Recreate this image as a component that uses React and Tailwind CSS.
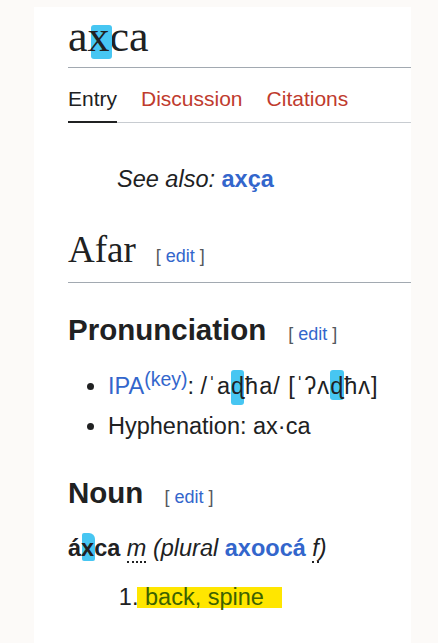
const Edit = () => (
  <span className="text-[18px] leading-[24px] text-[#54595d]">
    [ <span className="text-[#3366cc]">edit</span> ]
  </span>
);

// cyan marker box behind one glyph
const Mark = ({ children, box }) => (
  <span className="relative">
    <span className={box}></span>
    <span className="relative">{children}</span>
  </span>
);

export default function App() {
  return (
    <div className="min-h-screen bg-[#fcfaf8] pt-[7px] pl-[34px] pr-[27px]">
      <div className="min-h-[636px] bg-white pl-[34px] pt-[4px] text-[#202122] font-['Liberation_Sans',Arial,sans-serif]">
        <h1 className="border-b border-[#a2a9b1] pb-[4px] text-[44px] leading-[52px] font-normal font-['Liberation_Serif','Times_New_Roman',serif]">
          a
          <Mark box="absolute left-[3px] top-[13px] h-[34px] w-[21px] rounded-[3px] bg-[#47c6f2]">x</Mark>
          ca
        </h1>

        <nav className="mt-[16px] flex gap-[24px] border-b border-[#c8ccd1] text-[21px] leading-[30px]">
          <span className="-mb-px border-b-2 border-[#202122] pb-[7px]">Entry</span>
          <span className="-mb-px border-b-2 border-transparent pb-[7px] text-[#bf3b2e]">Discussion</span>
          <span className="-mb-px border-b-2 border-transparent pb-[7px] text-[#bf3b2e]">Citations</span>
        </nav>

        <div className="mt-[40px] pl-[49px] text-[23.5px] leading-[32px] italic">
          See also: <b className="not-italic text-[#3366cc]">axça</b>
        </div>

        <div className="mt-[33px] flex items-baseline gap-[20px] border-b border-[#a2a9b1] pb-[10px]">
          <h2 className="text-[37px] leading-[44px] font-normal font-['Liberation_Serif','Times_New_Roman',serif]">Afar</h2>
          <Edit />
        </div>

        <div className="mt-[29px] flex items-baseline gap-[22px]">
          <h3 className="text-[29.5px] leading-[36px] font-bold">Pronunciation</h3>
          <Edit />
        </div>

        <ul className="mt-[18px] list-disc pl-[40px] text-[23.5px] leading-[40px]">
          <li>
            <span className="text-[#3366cc]">IPA</span>
            <sup className="-top-[8px] text-[19.5px] text-[#3366cc]">(key)</sup>
            :{" "}
            <span className="tracking-[1px]">
              /ˈa
              <Mark box="absolute left-[0px] -top-[3px] h-[35px] w-[13px] rounded-[3px] bg-[#47c6f2]">ɖ</Mark>
              ħa/ [ˈʔʌ
              <Mark box="absolute left-[0px] -top-[3px] h-[30px] w-[14px] rounded-[3px] bg-[#47c6f2]">ɖ</Mark>
              ħʌ]
            </span>
          </li>
          <li>Hyphenation: ax·ca</li>
        </ul>

        <div className="mt-[29px] flex items-baseline gap-[21px]">
          <h3 className="text-[29.5px] leading-[36px] font-bold">Noun</h3>
          <Edit />
        </div>

        <p className="mt-[21px] text-[23.5px] leading-[32px]">
          <b>
            á
            <Mark box="absolute left-[1px] -top-[2px] h-[28px] w-[13px] rounded-tr-[6px] rounded-[2px] bg-[#47c6f2]">x</Mark>
            ca
          </b>{" "}
          <i className="border-b-2 border-dotted border-[#202122]">m</i>{" "}
          <i>
            (plural <b className="not-italic text-[#3366cc]">axoocá</b>{" "}
            <span className="border-b-2 border-dotted border-[#202122]">f</span>)
          </i>
        </p>

        <ol className="mt-[17px] list-decimal pl-[77px] text-[23.5px] leading-[32px]">
          <li>
            <span className="relative">
              <span className="absolute -left-[8px] top-[3px] h-[21px] w-[145px] bg-[#ffe600]"></span>
              <span className="relative text-[#3d6200]">back, spine</span>
            </span>
          </li>
        </ol>
      </div>
    </div>
  );
}
